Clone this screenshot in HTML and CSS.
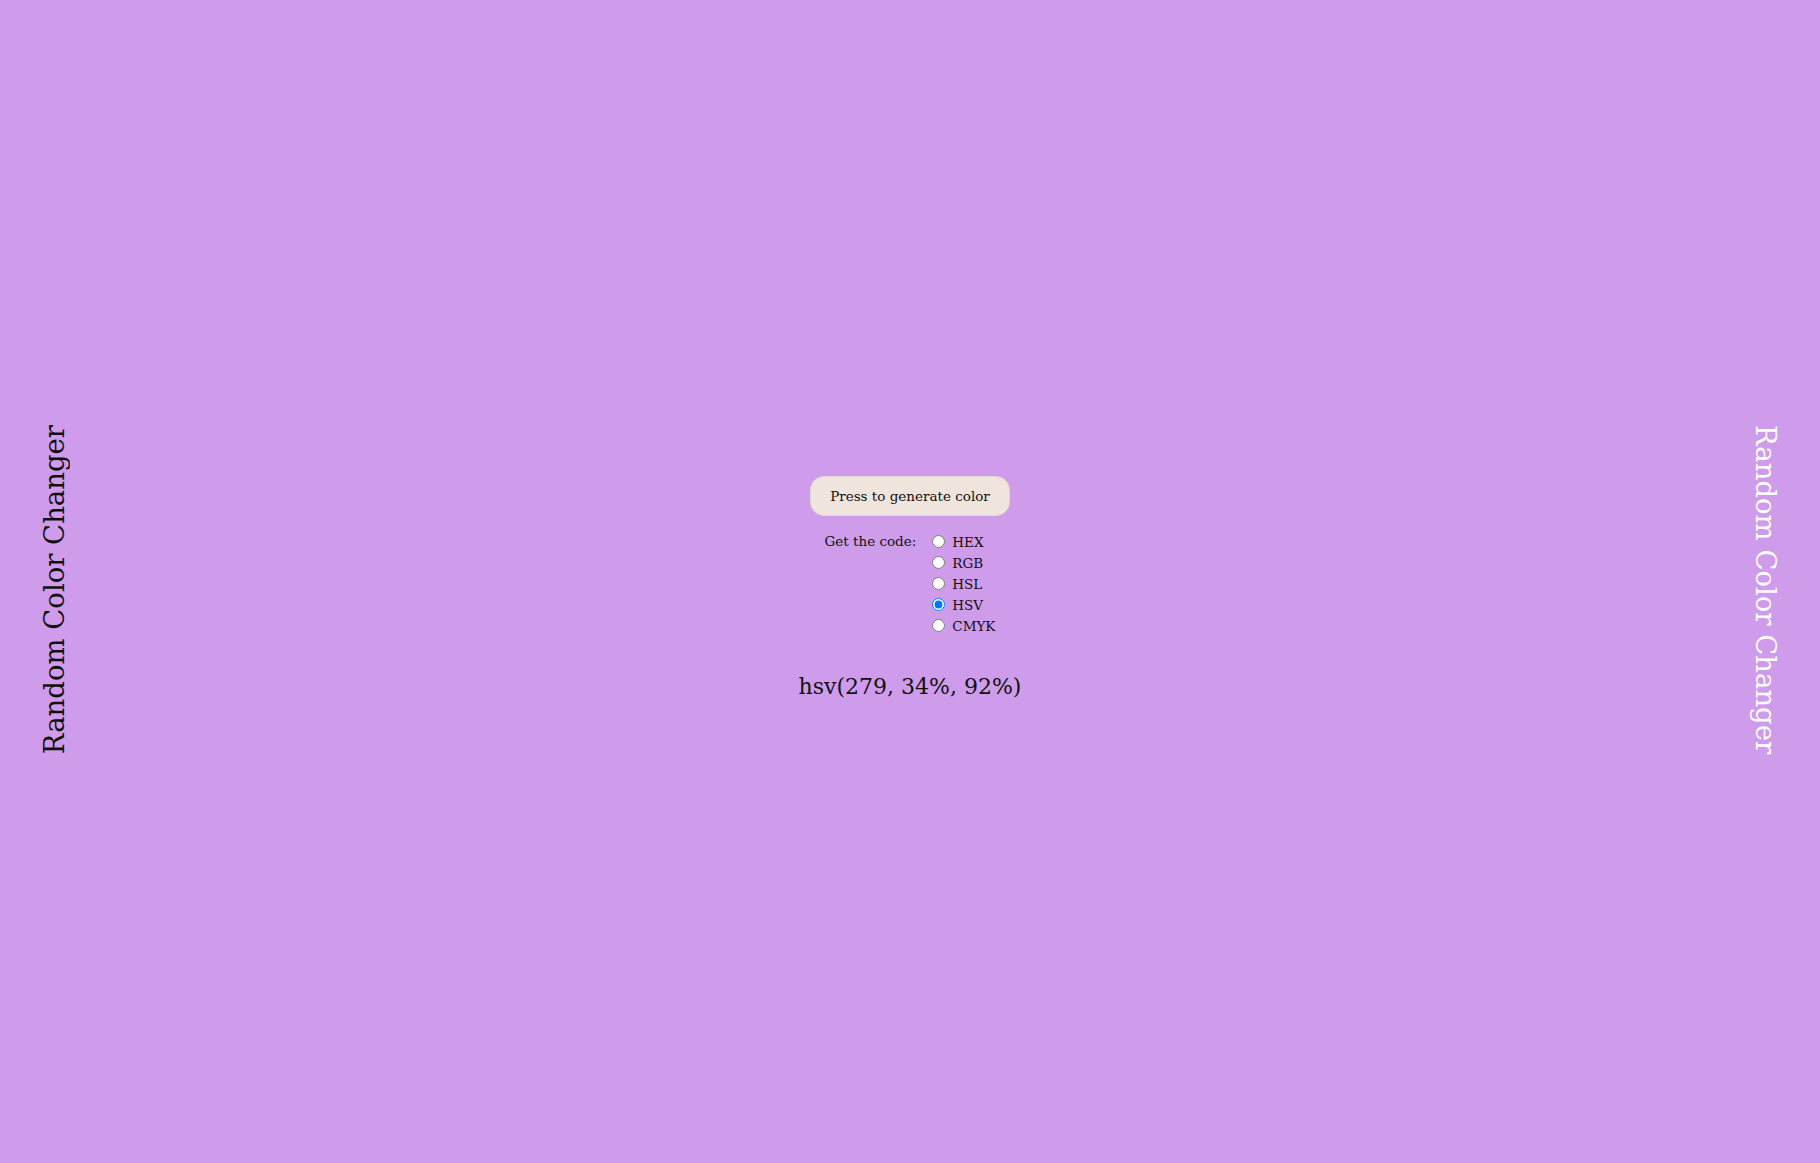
FILE: index.html
```html
<!DOCTYPE html>
<html lang="en">
<head>
<meta charset="utf-8">
<title>Random Color Changer</title>
<link rel="stylesheet" href="styles.css">
</head>
<body>
<div class="page">
  <div class="side side-left">Random Color Changer</div>
  <main class="center">
    <button class="generate" type="button">Press to generate color</button>
    <div class="code-row">
      <span class="code-label">Get the code:</span>
      <div class="options">
        <label class="option"><input type="radio" name="fmt" value="hex"><span>HEX</span></label>
        <label class="option"><input type="radio" name="fmt" value="rgb"><span>RGB</span></label>
        <label class="option"><input type="radio" name="fmt" value="hsl"><span>HSL</span></label>
        <label class="option"><input type="radio" name="fmt" value="hsv" checked><span>HSV</span></label>
        <label class="option"><input type="radio" name="fmt" value="cmyk"><span>CMYK</span></label>
      </div>
    </div>
    <div class="output">hsv(279, 34%, 92%)</div>
  </main>
  <div class="side side-right">Random Color Changer</div>
</div>
</body>
</html>
```
FILE: styles.css
```css
html, body {
  margin: 0;
  padding: 0;
}
body {
  background: #cf9beb;
  font-family: "DejaVu Serif", "Liberation Serif", serif;
  color: #111;
}
.page {
  box-sizing: border-box;
  height: 100vh;
  padding: 17px 38px 0 38px;
  display: flex;
  align-items: center;
  justify-content: space-between;
}
.side {
  writing-mode: vertical-rl;
  font-size: 27.5px;
  line-height: 32px;
  white-space: nowrap;
}
.side-left {
  transform: rotate(180deg);
  color: #111;
}
.side-right {
  color: #ffffff;
}
.center {
  display: flex;
  flex-direction: column;
  align-items: center;
  padding-bottom: 2px;
}
.generate {
  width: 200px;
  height: 40px;
  border-radius: 14px;
  border: 1px solid #e4d6d6;
  background: #efe5dc;
  font-family: "DejaVu Serif", "Liberation Serif", serif;
  font-size: 13.5px;
  color: #111;
  padding: 0;
}
.code-row {
  display: flex;
  margin-top: 15px;
  gap: 13px;
  font-size: 13.5px;
}
.code-label {
  line-height: 21px;
}
.options {
  display: flex;
  flex-direction: column;
}
.option {
  display: flex;
  align-items: center;
  height: 21px;
}
.option input {
  width: 13px;
  height: 13px;
  margin: 0 7px 0 3px;
}
.output {
  margin-top: 36px;
  font-size: 22px;
  line-height: 30px;
}
```
